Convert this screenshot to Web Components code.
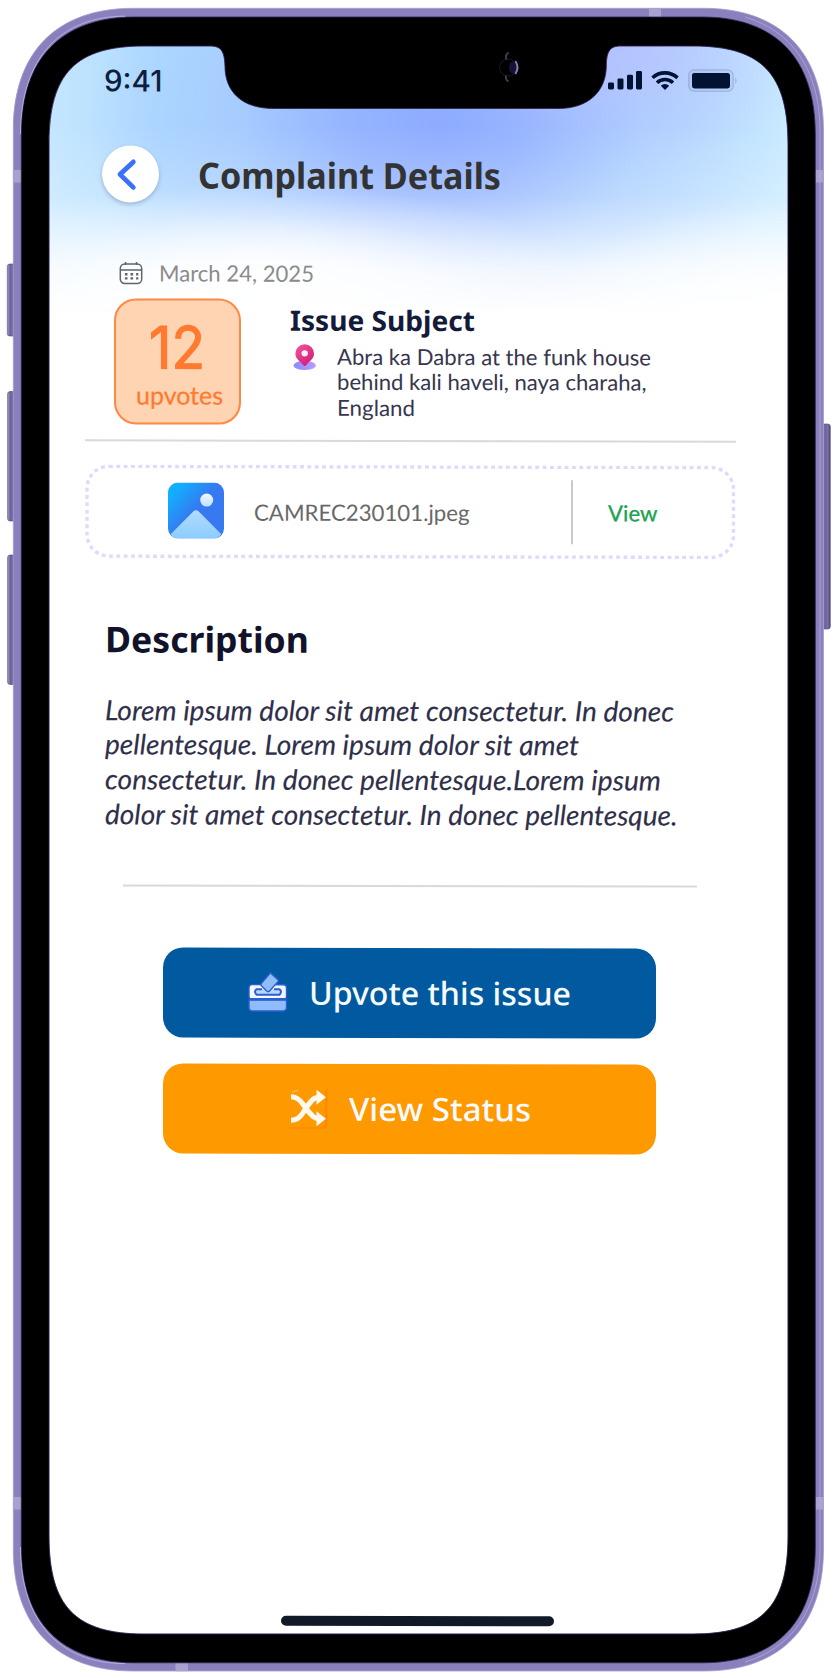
<!DOCTYPE html>
<html lang="en">
<head>
<meta charset="utf-8">
<title>Complaint Details</title>
<style>
  html, body { margin: 0; background: #fff; }
  body { width: 838px; height: 1678px; overflow: hidden; font-family: Lato, "Noto Sans", sans-serif; }
</style>
</head>
<body>
<phone-frame>
  <status-bar time="9:41"></status-bar>
  <page-header>Complaint Details</page-header>
  <date-row>March 24, 2025</date-row>
  <issue-summary>
    <upvote-badge slot="badge" count="12">upvotes</upvote-badge>
    <fit-text class="subject" slot="subject" width="185">Issue Subject</fit-text>
    <fit-text slot="address" width="314">Abra ka Dabra at the funk house</fit-text>
    <fit-text slot="address" width="309.500">behind kali haveli, naya charaha,</fit-text>
    <fit-text slot="address" width="78">England</fit-text>
  </issue-summary>
  <hr-line style="margin:15px 52.500px 0 36px"></hr-line>
  <file-attachment name="CAMREC230101.jpeg" action="View"></file-attachment>
  <text-section>
    <fit-text slot="title" width="204">Description</fit-text>
    <fit-text width="569">Lorem ipsum dolor sit amet consectetur. In donec</fit-text>
    <fit-text width="474">pellentesque. Lorem ipsum dolor sit amet</fit-text>
    <fit-text width="556">consectetur. In donec pellentesque.Lorem ipsum</fit-text>
    <fit-text width="572.500">dolor sit amet consectetur. In donec pellentesque.</fit-text>
  </text-section>
  <hr-line style="margin:53px 91.500px 0 74px"></hr-line>
  <action-stack>
    <action-button icon="vote" width="262" style="--bg:#01599f;--gap:19.500px;--left:84px">Upvote this issue</action-button>
    <action-button icon="shuffle" width="182" style="--bg:#ff9900;--gap:20px;--left:124px">View Status</action-button>
  </action-stack>
  <home-indicator></home-indicator>
</phone-frame>

<script>
function define(name, html, setup) {
  const tpl = document.createElement('template');
  tpl.innerHTML = html;
  customElements.define(name, class extends HTMLElement {
    constructor() {
      super();
      this.attachShadow({ mode: 'open' }).append(tpl.content.cloneNode(true));
    }
    connectedCallback() { if (setup) setup(this, this.shadowRoot); }
  });
}

/* One line of text, scaled horizontally to a given width. */
define('fit-text', `
  <style>
    :host { display: block; white-space: nowrap; }
    span { display: inline-block; transform-origin: 0 50%; white-space: nowrap; }
  </style><span><slot></slot></span>`, (el, root) => {
  const w = parseFloat(el.getAttribute('width'));
  const span = root.querySelector('span');
  el.style.width = w + 'px';
  const fit = () => {
    span.style.transform = 'none';
    const n = span.getBoundingClientRect().width;
    if (n) span.style.transform = 'scaleX(' + w / n + ')';
  };
  requestAnimationFrame(fit);
  fit();
});

define('hr-line', `<style>:host { display: block; height: 2px; background: #d9d9da; flex: none; }</style>`);

define('status-bar', `
  <style>
    :host { display: flex; height: 70px; align-items: center; justify-content: space-between; padding: 0 49px 0 55px; box-sizing: border-box; }
    fit-text { font: 500 29.5px/70px Inter, sans-serif; color: #0c1f40; }
    svg { display: block; margin-top: -2px; }
  </style>
  <fit-text width="58.500"></fit-text>
  <svg width="132" height="24" viewBox="0 0 132 24" fill="#021233">
    <rect x="1" y="14" width="6" height="7" rx="1.4"/><rect x="10.500" y="10" width="6" height="11" rx="1.4"/>
    <rect x="20" y="6.300" width="6" height="14.700" rx="1.4"/><rect x="29" y="2.500" width="6" height="18.500" rx="1.4"/>
    <g fill="none" stroke="#021233" stroke-width="3.600"><path d="M45.500 9.300a18.200 18.200 0 0 1 25 0"/><path d="M50 14.200a11.500 11.500 0 0 1 16 0"/></g>
    <path d="M53.800 17.200a6.200 6.200 0 0 1 8.400 0L58 21.600z"/>
    <rect x="81.700" y="1.200" width="44.500" height="21.500" rx="5.500" fill="#021233" fill-opacity=".04" stroke="#021233" stroke-opacity=".14" stroke-width="1.300"/>
    <rect x="85" y="4.300" width="38" height="15.500" rx="2.500"/><path d="M128.300 8.500q2.500 3.500 0 7z" opacity=".2"/>
  </svg>`, (el, root) => { root.querySelector('fit-text').textContent = el.getAttribute('time'); });

define('page-header', `
  <style>
    :host { display: flex; height: 117px; align-items: center; padding-left: 52.500px; }
    .back { width: 57px; height: 57px; border-radius: 50%; background: #fff; box-shadow: 0 2px 4px rgba(60,80,120,.32); display: grid; place-items: center; margin-top: 0; }
    fit-text { margin: 3px 0 0 39px; font: 700 36px/50px "Noto Sans", sans-serif; color: #333; }
  </style>
  <div class="back"><svg width="57" height="57" viewBox="0 0 57 57" fill="none" stroke="#3b70fd" stroke-width="4.800" stroke-linecap="round" stroke-linejoin="round"><path d="M31.300 16.500 18 29l13.300 13"/></svg></div>
  <fit-text width="303"><slot></slot></fit-text>`);

define('date-row', `
  <style>
    :host { display: flex; align-items: center; height: 26px; margin: 28px 0 0 70px; gap: 16px; }
    fit-text { font: 400 22.500px/26px Lato, sans-serif; color: #8b8b8c; }
  </style>
  <svg width="24" height="24" viewBox="0 0 24 24" fill="none" stroke="#626466" stroke-width="1.500"><rect x="1.300" y="2.500" width="21.400" height="19.700" rx="4.500"/><path d="M1.300 8.500h21.400M6.500.5v3.200M17.500.5v3.200"/><g stroke-width="2.400" stroke-dasharray="2.600 3"><path d="M5.900 12.900h13.400M5.900 17h13.400"/></g></svg>
  <fit-text width="155"><slot></slot></fit-text>`);

define('upvote-badge', `
  <style>
    :host { display: flex; flex-direction: column; align-items: center; box-sizing: border-box; width: 127px; height: 126px; border: 2px solid #ff8844; border-radius: 22px; background: #ffd4b3; color: #ff7a30; }
    .n { font: 400 58.500px/70px Inter, sans-serif; -webkit-text-stroke: 1.200px #ff7a30; stroke-linejoin: round; margin: 12px 0 0 -2px; }
    .l { font: 400 25px/28px Lato, sans-serif; -webkit-text-stroke: .25px #ff7a30; margin: -2px 0 0 3px; }
  </style>
  <fit-text class="n" width="56"></fit-text><fit-text class="l" width="87"><slot></slot></fit-text>`,
  (el, root) => { root.querySelector('.n').textContent = el.getAttribute('count'); });

define('issue-summary', `
  <style>
    :host { display: flex; margin: 11.500px 0 0 65px; height: 126px; }
    .info { margin: 3.500px 0 0 49px; display: flex; flex-direction: column; }
    .loc { display: flex; margin-top: 5.500px; }
    .loc svg { margin-left: 3px; margin-top: 0; flex: none; }
    .addr { margin-left: 20px; font: 400 22px/25.500px Lato, sans-serif; color: #37364e; }
    .subject { font: 700 28px/36px "Noto Sans", sans-serif; color: #141b3a; }
  </style>
  <slot name="badge"></slot>
  <div class="info">
    <div class="subject"><slot name="subject"></slot></div>
    <div class="loc">
      <svg width="24" height="28" viewBox="0 0 24 28"><defs><linearGradient id="p" x1="0" y1="0" x2=".7" y2="1"><stop stop-color="#f1589c"/><stop offset="1" stop-color="#d41c78"/></linearGradient><linearGradient id="e" x1="0" x2="1"><stop stop-color="#858dfb"/><stop offset="1" stop-color="#b89cff"/></linearGradient></defs>
      <ellipse cx="11.700" cy="21.700" rx="11.200" ry="4.600" fill="url(#e)"/><path d="M11.700.5a9.300 9.300 0 0 0-9.300 9.400c0 4.300 3 6.300 5.500 8.800 1.600 1.600 2.400 3.500 3.800 3.500s2.200-1.900 3.800-3.500c2.500-2.500 5.500-4.500 5.500-8.800A9.300 9.300 0 0 0 11.700.5z" fill="url(#p)"/><circle cx="11.700" cy="9.600" r="3.200" fill="#fff1f7"/></svg>
      <div class="addr"><slot name="address"></slot></div>
    </div>
  </div>`);

define('file-attachment', `
  <style>
    :host { display: grid; margin: 23px 53px 0 36px; height: 94px; flex: none; }
    :host > * { grid-area: 1 / 1; }
    .row { display: flex; align-items: center; }
    .pic { margin-left: 82.500px; margin-top: -1px; }
    .name { margin-left: 30.500px; font: 400 22.500px/30px Lato, sans-serif; color: #686868; margin-top: 2px; }
    .bar { width: 2px; height: 64px; background: #c9c9c9; margin-left: 101px; margin-top: 0; }
    .act { margin-left: 35.500px; font: 500 22.500px/30px Lato, sans-serif; color: #1fa352; -webkit-text-stroke: .2px #1fa352; margin-top: 2px; }
  </style>
  <svg width="651" height="94" fill="none"><rect x="2" y="2" width="646.500" height="89.800" rx="22" stroke="#dedaff" stroke-width="3.300" stroke-dasharray="3.800 3.550"/></svg>
  <div class="row">
    <svg class="pic" width="56" height="56" viewBox="0 0 56 56"><defs><linearGradient id="a" x1="0" y1=".1" x2=".8" y2=".8"><stop offset=".1" stop-color="#10b0ff"/><stop offset=".6" stop-color="#3679f0"/></linearGradient><linearGradient id="b" x1="0" y1="0" x2="0" y2="1"><stop stop-color="#b2dcff"/><stop offset="1" stop-color="#8bcdff"/></linearGradient><linearGradient id="s" x1="0" y1="0" x2="0" y2="1"><stop stop-color="#f0f8ff"/><stop offset="1" stop-color="#bfe1ff"/></linearGradient></defs>
    <rect width="56" height="56" rx="10" fill="url(#a)"/><path d="M2.700 51.700 25 29.200q3-2.800 6 0L53.300 51.700Q50.500 56 46 56H10q-4.500 0-7.300-4.300z" fill="url(#b)"/><circle cx="38.700" cy="17.500" r="6.500" fill="url(#s)"/></svg>
    <fit-text class="name" width="215.500"></fit-text>
    <div class="bar"></div>
    <fit-text class="act" width="49.500"></fit-text>
  </div>`, (el, root) => {
  root.querySelector('.name').textContent = el.getAttribute('name');
  root.querySelector('.act').textContent = el.getAttribute('action');
});

define('text-section', `
  <style>
    :host { display: block; margin: 58.500px 0 0 55.500px; }
    .t { font: 700 35.500px/44px "Noto Sans", sans-serif; color: #12122b; }
    .b { margin-top: 31.500px; font: italic 400 28px/34.800px Lato, sans-serif; color: #2f2f4a; -webkit-text-stroke: .15px #2f2f4a; }
  </style>
  <div class="t"><slot name="title"></slot></div><div class="b"><slot></slot></div>`);

define('action-stack', `
  <style>:host { display: grid; gap: 26px; margin: 61px 132.500px 0 114px; }</style><slot></slot>`);

const ICONS = {
  vote: `<svg width="42" height="42" viewBox="0 0 42 42"><g stroke="#2b5fd0" stroke-width="1.400" stroke-linejoin="round">
    <rect x="2" y="13" width="37.500" height="15" rx="3" fill="#f3f7ff"/>
    <path d="M2 28.300h37.500v7.500q0 3.500-3.500 3.500H5.500q-3.500 0-3.500-3.500z" fill="#8ebcfc"/>
    <path d="M2.500 27.500h36.500" stroke-width="2.200" fill="none"/>
    <path d="M15 17.500H9.500q-3 2.500 0 5.500h23q3-3 0-5.500H27" fill="#b9d4ff" stroke-width="2"/>
    <path d="m24 1.200 7 6.300q.8.900 0 1.900l-8.500 9.500q-1.500 1.200-2.800 0l-5.300-5.300q-1-1.200 0-2.400l8.500-9.900q.6-.9 1.100-.6z" fill="#8fbdfc" transform="translate(0 .5)"/></g></svg>`,
  shuffle: `<svg width="42" height="42" viewBox="0 0 42 42"><path d="M39 1.500q1.500 0 1.500 2V37q0 4-4 4H4q-3 0-3-1.500h32q5 0 5-5V2z" fill="#f98a06"/>
    <g fill="none" stroke="#fff8ef" stroke-width="5.200"><path d="M4 9q7 0 12 7.500t10 12.200q2.500 2 6 2"/><path d="M4 32.500q7.500 0 12-7.500t9-12.500q3-3 7-3"/></g>
    <path d="m29.500 2 9.500 7.500-9.500 7.500zM29.500 23.500l9.500 7.500-9.500 7.500z" fill="#fff8ef"/><path d="M5 4.500q4-2 6-1.200" stroke="#ffc36b" fill="none"/></svg>`
};

define('action-button', `
  <style>
    :host { display: flex; align-items: center; height: 90px; box-sizing: border-box; border-radius: 20px; background: var(--bg); padding-left: var(--left); gap: var(--gap); }
    .i { flex: none; } .i svg { display: block; }
    fit-text { font: 500 32px/44px "Noto Sans", sans-serif; color: #f6fbff; margin-top: 1px; }
  </style>
  <div class="i"></div><fit-text><slot></slot></fit-text>`, (el, root) => {
  root.querySelector('.i').innerHTML = ICONS[el.getAttribute('icon')];
  const t = root.querySelector('fit-text');
  t.setAttribute('width', el.getAttribute('width'));
  t.connectedCallback();
});

define('home-indicator', `<style>:host { display: block; width: 273px; height: 9.500px; border-radius: 5px; background: #111827; margin: auto 0 8.500px 232px; }</style>`);

define('phone-frame', `
  <style>
    :host { display: grid; width: 838px; height: 1678px; position: relative; }
    .screen { margin: 46px 50px 44px 49px; height: 1588px; width: 739px; overflow: hidden;
      background:
        radial-gradient(ellipse 330px 100px at 210px 238px, #fff 0%, rgba(255,255,255,.75) 35%, rgba(255,255,255,.25) 70%, rgba(255,255,255,0) 100%),
        radial-gradient(ellipse 260px 120px at 739px 275px, #fff 0%, rgba(255,255,255,.6) 40%, rgba(255,255,255,0) 100%),
        linear-gradient(to bottom, rgba(255,255,255,0) 80px, rgba(255,255,255,.2) 150px, rgba(255,255,255,.5) 190px, rgba(255,255,255,.82) 225px, #fff 270px),
        radial-gradient(ellipse 190px 120px at 575px 0px, rgba(182,190,255,.75) 0%, rgba(182,190,255,0) 100%),
        radial-gradient(ellipse 350px 270px at 390px 80px, #8eabff 0%, rgba(142,173,255,.85) 25%, rgba(154,188,255,.48) 58%, rgba(190,225,255,0) 100%),
        linear-gradient(to right, #c4e6ff 0, #b0dbff 110px, #b5dcff 400px, #c9eaff 739px); }
    .content { height: 100%; display: flex; flex-direction: column; transform: skewY(.12deg); }
    .case { position: absolute; inset: 0; pointer-events: none; }
  </style>
  <div class="screen"><div class="content"><slot></slot></div></div>
  <svg class="case" width="838" height="1678" viewBox="0 0 838 1678">
    <defs>
      <linearGradient id="bt" x1="0" x2="1"><stop stop-color="#a79fce"/><stop offset=".35" stop-color="#6b6197"/><stop offset=".7" stop-color="#7b72a8"/><stop offset="1" stop-color="#4b4278"/></linearGradient>
    </defs>
    <g fill="url(#bt)" stroke="#51467d" stroke-width=".6"><rect x="7.300" y="264" width="8" height="72" rx="2.500"/><rect x="7.600" y="391.500" width="8" height="129.500" rx="2.500"/><rect x="7.600" y="555" width="8" height="129.500" rx="2.500"/><rect x="822" y="424" width="8.300" height="205" rx="2.500"/></g>
    <path fill-rule="evenodd" fill="#8b80be" stroke="#a69dcc" stroke-width=".8" d="M13.300 130C13.300 52 57 8.300 133 8.300H704C780 8.300 823.500 52 823.500 130V1549C823.500 1627 780 1671 704 1671H133C57 1671 13.300 1627 13.300 1549Z
      M49 144C49 73 76 46 144 46H210C221 46 224.500 51 225 66C225 91 241 108.500 274 108.500H558C589 108.500 606 91 606.300 66C606.500 51 610 46 621 46H693C761 46 788 73 788 144V1536C788 1607 761 1634 693 1634H144C76 1634 49 1607 49 1536Z"/>
    <g fill="#aaa1d0"><path d="M13 170h9v12.500h-9zM815 170h9v12.500h-9zM13 1497h9v12.500h-9zM815 1497h9v12.500h-9zM649 8h12v10h-12zM175.500 1662h12.500v9.300h-12.500z"/></g>
    <path fill-rule="evenodd" stroke="#2c2450" stroke-width=".8" d="M21.300 134C21.300 59 61 17 135 17H702C776 17 815.300 59 815.300 134V1547C815.300 1622 776 1662.800 702 1662.800H135C61 1662.800 21.300 1622 21.300 1547Z
      M49 144C49 73 76 46 144 46H210C221 46 224.500 51 225 66C225 91 241 108.500 274 108.500H558C589 108.500 606 91 606.300 66C606.500 51 610 46 621 46H693C761 46 788 73 788 144V1536C788 1607 761 1634 693 1634H144C76 1634 49 1607 49 1536Z"/>
    <g fill="none" stroke="#b6aedb" stroke-width="1"><path d="M20.500 134C20.500 58.500 60.500 16.200 125 16.200"/><path d="M20.500 1547C20.500 1622.500 60.500 1663.600 125 1663.600"/><path d="M745 17C790 30 819.800 68 820 130V1549C819.800 1611 790 1649 745 1662" stroke-opacity=".7"/></g>
    <g fill="none"><circle cx="508" cy="67.500" r="8.500" stroke="#1c1724" stroke-width="1"/><ellipse cx="513" cy="67.500" rx="4" ry="6" fill="#1a1236"/><path d="M515.300 61q4.500 6.500 0 13" stroke="#8d7fb8" stroke-width="1.800"/><path d="M508.500 52.500q-4 3-2 7M506 75.500q-1 4 2.500 6" stroke="#45404e" stroke-width="1.800"/></g>
  </svg>`);
</script>
</body>
</html>
